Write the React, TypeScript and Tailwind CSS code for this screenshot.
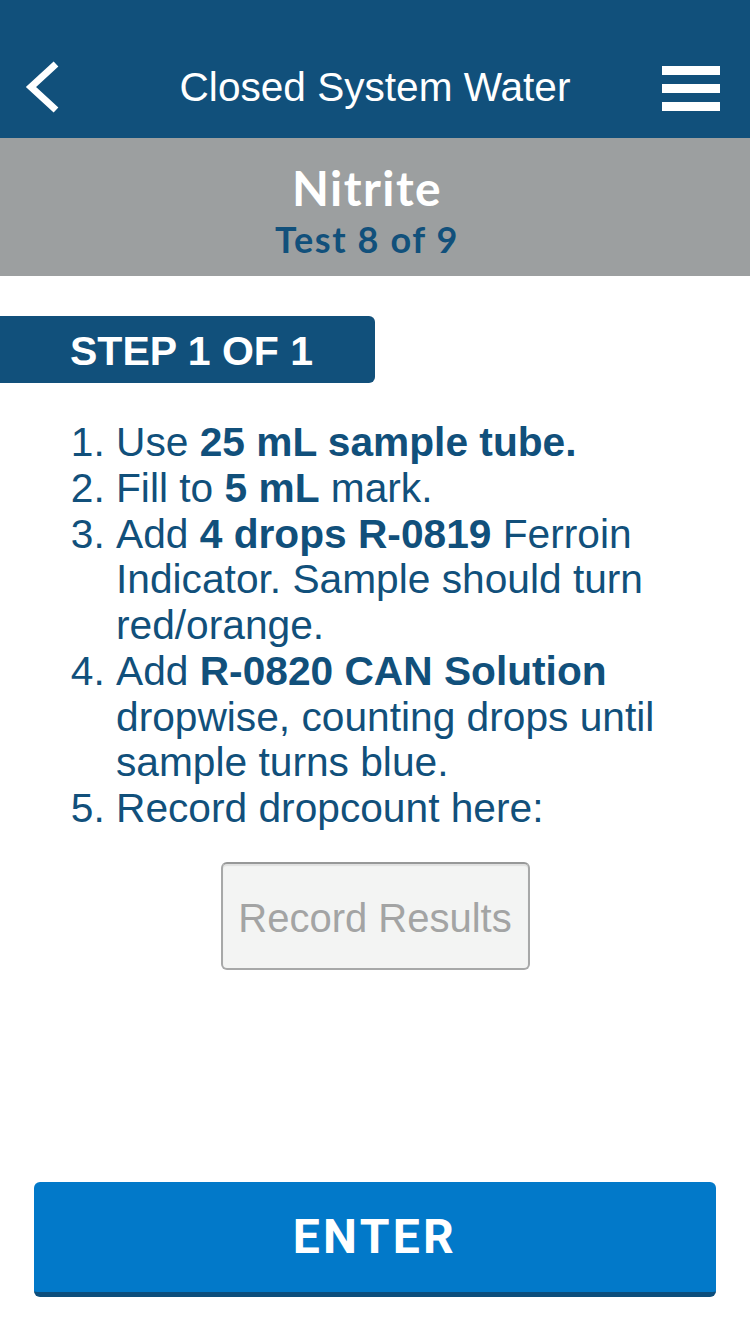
import React from "react";

const steps: React.ReactNode[] = [
	<>
		Use <b>25 mL sample tube.</b>
	</>,
	<>
		Fill to <b>5 mL</b> mark.
	</>,
	<>
		Add <b>4 drops R-0819</b> Ferroin Indicator. Sample should turn red/orange.
	</>,
	<>
		Add <b>R-0820 CAN Solution</b> dropwise, counting drops until sample turns blue.
	</>,
	<>Record dropcount here:</>,
];

const Header: React.FC = () => {
	return (
		<header className="h-[138px] bg-[#11507b] pt-[36px]">
			<div className="grid h-full grid-cols-[1fr_auto_1fr] items-center">
				<div className="pl-[22px]">
					<svg width="40" height="52" viewBox="0 0 40 52" className="block">
						<polyline
							points="34,3 9,26 34,49"
							fill="none"
							stroke="#ffffff"
							strokeWidth="7"
							strokeLinecap="butt"
							strokeLinejoin="miter"
						/>
					</svg>
				</div>
				<h1 className="font-['Liberation_Sans',Arial,sans-serif] text-[40.6px] leading-none text-white">
					Closed System Water
				</h1>
				<div className="flex justify-end pr-[30px]">
					<div className="flex w-[58px] flex-col gap-[9px] pt-[2px]">
						<span className="block h-[9px] bg-white" />
						<span className="block h-[9px] bg-white" />
						<span className="block h-[9px] bg-white" />
					</div>
				</div>
			</div>
		</header>
	);
};

export default function App() {
	return (
		<div className="flex h-[1334px] flex-col bg-white font-['Liberation_Sans',Arial,sans-serif]">
			<Header />
			<section className="flex h-[138px] flex-col items-center bg-[#9c9fa0] pr-[16px] pt-[26px] font-['Lato',sans-serif] font-bold">
				<div className="text-[48px] leading-none tracking-[0.03em] text-white">Nitrite</div>
				<div className="mt-[9px] text-[36px] leading-none tracking-[0.045em] text-[#11507b]">
					Test 8 of 9
				</div>
			</section>

			<div className="mt-[40px] h-[67px] w-[375px] rounded-r-[6px] bg-[#11507b] pl-[70px] pt-[15px]">
				<span className="text-[41px] font-bold leading-none text-white">STEP 1 OF 1</span>
			</div>

			<ol className="mt-[37px] list-decimal pl-[116px] pr-[40px] text-[40.7px] leading-[45.75px] text-[#11507b]">
				{steps.map((s, i) => (
					<li key={i}>{s}</li>
				))}
			</ol>

			<div className="mt-[30px] flex justify-center">
				<button className="flex h-[108px] w-[309px] items-center justify-center rounded-[6px] border-2 border-[#a7a8a8] border-t-[#979898] bg-[#f3f4f3] pt-[4px] shadow-[inset_0_2px_1px_rgba(0,0,0,0.08)]">
					<span className="text-[40px] leading-none text-[#a3a4a4]">Record Results</span>
				</button>
			</div>

			<button className="mx-[34px] mb-[37px] mt-auto flex h-[115px] items-center justify-center rounded-[6px] border-b-[5px] border-[#0d4e7c] bg-[#0279c9]">
				<span className="font-['Roboto',sans-serif] text-[48px] font-bold leading-none tracking-[0.07em] text-white">
					ENTER
				</span>
			</button>
		</div>
	);
}
